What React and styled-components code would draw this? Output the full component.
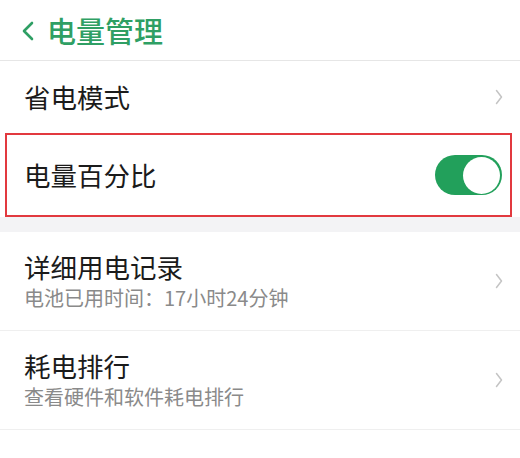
import React from "react";
import styled, { createGlobalStyle } from "styled-components";

const Global = createGlobalStyle`
  html, body { margin: 0; padding: 0; background: #ffffff; }
  body { font-family: "Noto Sans CJK SC", "Noto Sans", sans-serif; -webkit-font-smoothing: antialiased; }
  * { box-sizing: border-box; }
`;

const Page = styled.div`
  width: 520px;
  height: 458px;
  background: #ffffff;
  overflow: hidden;
  display: flex;
  flex-direction: column;
`;

const Header = styled.header`
  height: 61px;
  flex: none;
  display: flex;
  align-items: center;
  padding: 0 0 1px 22px;
  gap: 13px;
  border-bottom: 1px solid #e6e6e6;
`;

const Title = styled.h1`
  margin: 0;
  font-size: 29px;
  font-weight: 500;
  line-height: 36px;
  color: #2f9f64;
  letter-spacing: 0;
`;

const Row = styled.div`
  flex: none;
  height: ${(p) => p.$h}px;
  display: flex;
  align-items: center;
  justify-content: space-between;
  padding: 0 ${(p) => p.$pr ?? 17}px 0 ${(p) => p.$pl ?? 24}px;
  border-bottom: ${(p) => (p.$divider ? "1px solid #efefef" : "none")};
`;

const Highlight = styled.div`
  flex: none;
  margin: 0 8px 0 5px;
  border: 2px solid #e2393f;
`;

const Gap = styled.div`
  flex: none;
  height: 15px;
  background: #f3f3f5;
`;

const Texts = styled.div`
  display: flex;
  flex-direction: column;
`;

const Label = styled.div`
  font-size: 26.5px;
  line-height: 34px;
  color: #1b1b1b;
  font-weight: 400;
`;

const Sub = styled.div`
  font-size: 20px;
  line-height: 28px;
  color: #8a8a8a;
`;

const Toggle = styled.div`
  width: 67px;
  height: 40px;
  border-radius: 20px;
  background: #22a05b;
  display: flex;
  align-items: center;
  justify-content: flex-end;
  padding-right: 2px;
`;

const Knob = styled.div`
  width: 37px;
  height: 37px;
  border-radius: 50%;
  background: #ffffff;
`;

const Back = () => (
  <svg width="12" height="20" viewBox="0 0 12 20" style={{ marginTop: 2 }}>
    <polyline points="10,2 2,10 10,18" fill="none" stroke="#2f9f64" strokeWidth="2.6" strokeLinecap="round" strokeLinejoin="round" />
  </svg>
);

const Chevron = () => (
  <svg width="8" height="16" viewBox="0 0 8 16">
    <polyline points="1.5,1.5 6.5,8 1.5,14.5" fill="none" stroke="#c4c4c4" strokeWidth="1.5" strokeLinecap="round" strokeLinejoin="round" />
  </svg>
);

export default function App() {
  return (
    <>
      <Global />
      <Page>
        <Header>
          <Back />
          <Title>电量管理</Title>
        </Header>
        <Row $h={72}>
          <Label>省电模式</Label>
          <Chevron />
        </Row>
        <Highlight>
          <Row $h={80} $pl={17} $pr={8}>
            <Label>电量百分比</Label>
            <Toggle>
              <Knob />
            </Toggle>
          </Row>
        </Highlight>
        <Gap />
        <Row $h={99} $divider>
          <Texts>
            <Label>详细用电记录</Label>
            <Sub>电池已用时间：17小时24分钟</Sub>
          </Texts>
          <Chevron />
        </Row>
        <Row $h={99} $divider>
          <Texts>
            <Label>耗电排行</Label>
            <Sub>查看硬件和软件耗电排行</Sub>
          </Texts>
          <Chevron />
        </Row>
      </Page>
    </>
  );
}
